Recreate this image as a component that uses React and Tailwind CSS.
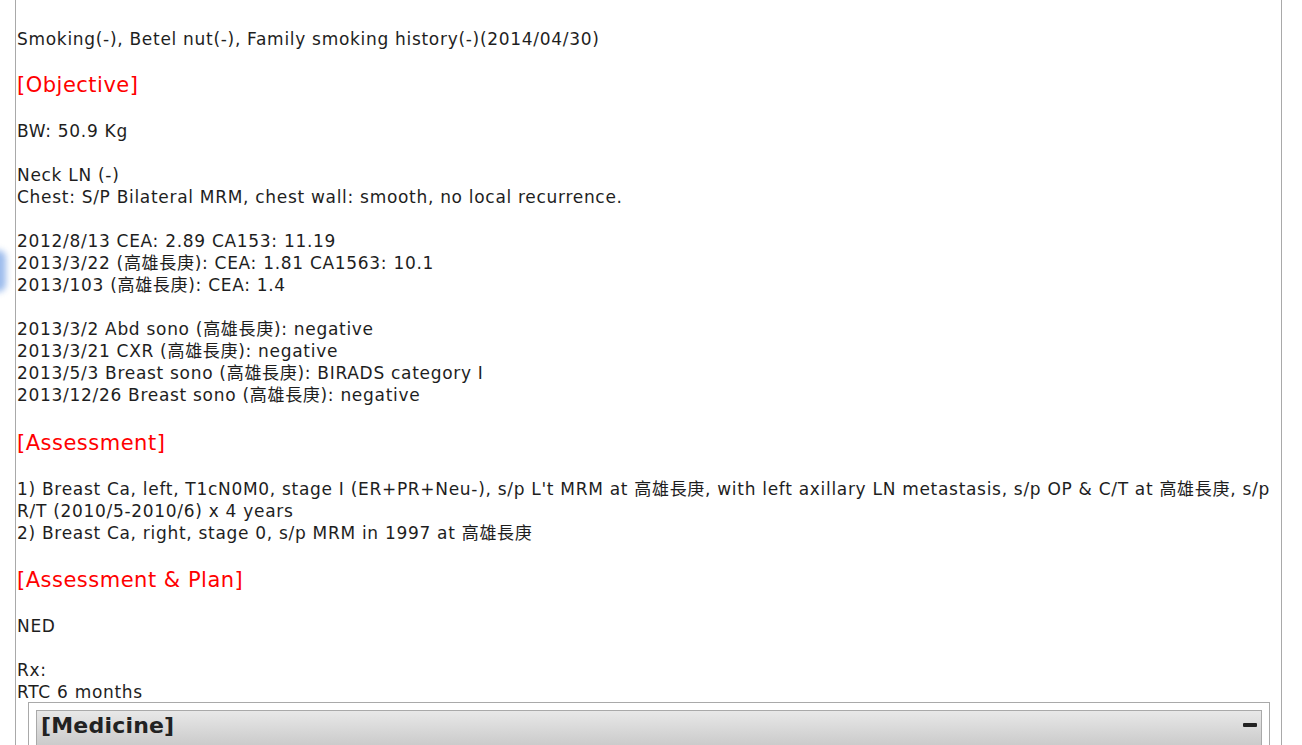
import React from 'react';

const FONT = "font-['DejaVu_Sans','Noto_Sans_CJK_TC',sans-serif]";

const Header = ({ children, className = '' }) => (
  <div className={`text-[21px] leading-[26px] tracking-[0.5px] text-[#ff0000] ${className}`}>{children}</div>
);

const Lines = ({ items }) => (
  <div>
    {items.map((t, i) => (
      <div key={i} className="min-h-[22px] whitespace-nowrap">{t}</div>
    ))}
  </div>
);

const App = () => {
  return (
    <div className={`relative w-[1302px] h-[745px] overflow-hidden bg-white ${FONT}`}>
      {/* partly hidden floating button at the left edge */}
      <div className="absolute -left-[10px] top-[250px] w-[16px] h-[42px] rounded-full bg-[#5b8fe0] blur-[3px] opacity-60" />

      <div className="ml-[15px] w-[1267px] h-full border-x border-[#a9a9a9] pl-px pt-[28px] text-[17px] leading-[22px] tracking-[0.7px] text-[#1e1e1e]">
        <Lines items={['Smoking(-), Betel nut(-), Family smoking history(-)(2014/04/30)']} />

        <Header className="mt-[22px] mb-[22px]">[Objective]</Header>
        <Lines
          items={[
            'BW: 50.9 Kg',
            '',
            'Neck LN (-)',
            'Chest: S/P Bilateral MRM, chest wall: smooth, no local recurrence.',
            '',
            '2012/8/13 CEA: 2.89 CA153: 11.19',
            '2013/3/22 (高雄長庚): CEA: 1.81 CA1563: 10.1',
            '2013/103 (高雄長庚): CEA: 1.4',
            '',
            '2013/3/2 Abd sono (高雄長庚): negative',
            '2013/3/21 CXR (高雄長庚): negative',
            '2013/5/3 Breast sono (高雄長庚): BIRADS category I',
            '2013/12/26 Breast sono (高雄長庚): negative',
          ]}
        />

        <Header className="mt-[24px] mb-[22px]">[Assessment]</Header>
        <Lines
          items={[
            '1) Breast Ca, left, T1cN0M0, stage I (ER+PR+Neu-), s/p L\'t MRM at 高雄長庚, with left axillary LN metastasis, s/p OP & C/T at 高雄長庚, s/p',
            'R/T (2010/5-2010/6) x 4 years',
            '2) Breast Ca, right, stage 0, s/p MRM in 1997 at 高雄長庚',
          ]}
        />

        <Header className="mt-[23px] mb-[22px]">[Assessment &amp; Plan]</Header>
        <Lines items={['NED', '', 'Rx:', 'RTC 6 months']} />

        <div className="ml-[11px] mr-[11px] mt-[-1px] border border-[#a9a9a9] px-[7px] pt-[7px] tracking-normal">
          <div className="h-[36px] border border-[#a9a9a9] bg-gradient-to-b from-[#e8e8e8] to-[#cbcbcb] flex items-center justify-between pl-[4px] pr-[4px]">
            <span className="text-[22px] font-bold text-[#222222] leading-none tracking-[0.2px] mb-[4px]">[Medicine]</span>
            <span className="block w-[14px] h-[4px] bg-[#222222] rounded-[1px] mb-[6px]" />
          </div>
        </div>
      </div>
    </div>
  );
};

export default App;
